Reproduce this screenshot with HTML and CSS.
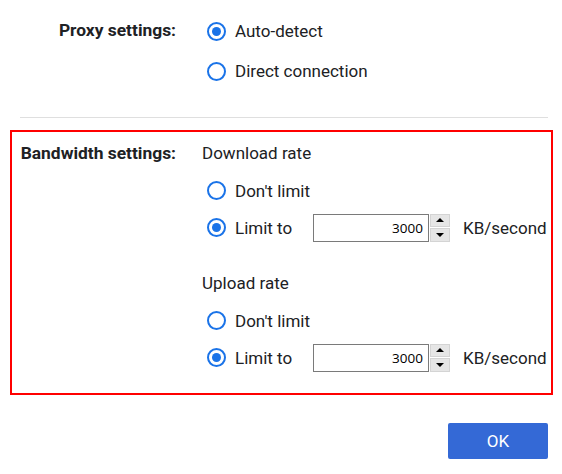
FILE: index.html
```html
<!DOCTYPE html>
<html>
<head>
<meta charset="utf-8">
<link rel="stylesheet" href="styles.css">
</head>
<body>
<div class="page">
  <div class="setting proxy">
    <div class="label">Proxy settings:</div>
    <div class="content">
      <div class="row"><span class="radio checked"></span><span class="opt">Auto-detect</span></div>
      <div class="row"><span class="radio"></span><span class="opt">Direct connection</span></div>
    </div>
  </div>
  <div class="sep"></div>
  <div class="setting bandwidth">
    <div class="label">Bandwidth settings:</div>
    <div class="content">
      <div class="group">
        <div class="heading">Download rate</div>
        <div class="row"><span class="radio"></span><span class="opt">Don't limit</span></div>
        <div class="row">
          <span class="radio checked"></span><span class="opt limit">Limit to</span>
          <span class="field">3000</span>
          <span class="spin"><span class="sbtn"><span class="up"></span></span><span class="sbtn"><span class="down"></span></span></span>
          <span class="unit">KB/second</span>
        </div>
      </div>
      <div class="group">
        <div class="heading">Upload rate</div>
        <div class="row"><span class="radio"></span><span class="opt">Don't limit</span></div>
        <div class="row">
          <span class="radio checked"></span><span class="opt limit">Limit to</span>
          <span class="field">3000</span>
          <span class="spin"><span class="sbtn"><span class="up"></span></span><span class="sbtn"><span class="down"></span></span></span>
          <span class="unit">KB/second</span>
        </div>
      </div>
    </div>
  </div>
  <div class="footer"><button class="ok">OK</button></div>
</div>
</body>
</html>
```
FILE: styles.css
```css
html, body {
  margin: 0;
  padding: 0;
  background: #fff;
}
body {
  font-family: Roboto, "Liberation Sans", sans-serif;
  font-size: 17px;
  color: #202124;
}
.page {
  width: 562px;
  padding-top: 11px;
}
.setting {
  display: grid;
  grid-template-columns: 156px 1fr;
  column-gap: 26px;
}
.proxy {
  margin-left: 20px;
  margin-right: 14px;
}
.label {
  font-weight: 700;
  font-size: 17.4px;
  text-align: right;
  line-height: 36px;
  margin-top: 0;
  color: #202124;
  white-space: nowrap;
}
.proxy .label {
  line-height: 38px;
}
.row {
  display: flex;
  align-items: center;
  height: 37px;
}
.proxy .row {
  height: 40px;
}
.radio {
  box-sizing: border-box;
  width: 19px;
  height: 19px;
  border: 2px solid #1a73e8;
  border-radius: 50%;
  margin-left: 5px;
  margin-right: 9px;
  display: flex;
  align-items: center;
  justify-content: center;
  flex: none;
}
.radio.checked::after {
  content: "";
  width: 9px;
  height: 9px;
  border-radius: 50%;
  background: #1a73e8;
}
.opt {
  line-height: 20px;
}
.opt.limit {
  width: 78px;
}
.sep {
  height: 1px;
  background: #dfdfdf;
  margin: 26px 14px 12px 20px;
}
.bandwidth {
  margin-left: 10px;
  margin-right: 9px;
  border: 2px solid #ff0000;
  padding: 3px 0 17px 8px;
}
.bandwidth .label {
  line-height: 37px;
}
.heading {
  height: 37px;
  line-height: 37px;
}
.group + .group {
  margin-top: 19px;
}
.field {
  box-sizing: border-box;
  width: 116px;
  height: 28px;
  border: 1px solid #7a7a7a;
  font-family: "Open Sans", "Liberation Sans", sans-serif;
  font-size: 13.5px;
  color: #000;
  text-align: right;
  padding-right: 5px;
  line-height: 26px;
  flex: none;
}
.spin {
  display: flex;
  flex-direction: column;
  width: 20px;
  height: 28px;
  margin-left: 1px;
  flex: none;
  gap: 1px;
}
.sbtn {
  flex: 1;
  background: #e6e6e6;
  border: 1px solid #d4d4d4;
  box-sizing: border-box;
  display: flex;
  align-items: center;
  justify-content: center;
}
.up {
  width: 0;
  height: 0;
  border-left: 4px solid transparent;
  border-right: 4px solid transparent;
  border-bottom: 4px solid #000;
}
.down {
  width: 0;
  height: 0;
  border-left: 4px solid transparent;
  border-right: 4px solid transparent;
  border-top: 4px solid #000;
}
.unit {
  margin-left: 13px;
  white-space: nowrap;
}
.footer {
  display: flex;
  justify-content: flex-end;
  margin: 28px 14px 0 0;
}
.ok {
  width: 100px;
  height: 36px;
  border: none;
  border-radius: 2px;
  background: #3469d6;
  color: #fff;
  font-family: Roboto, "Liberation Sans", sans-serif;
  font-size: 17px;
  padding: 0;
}
```
